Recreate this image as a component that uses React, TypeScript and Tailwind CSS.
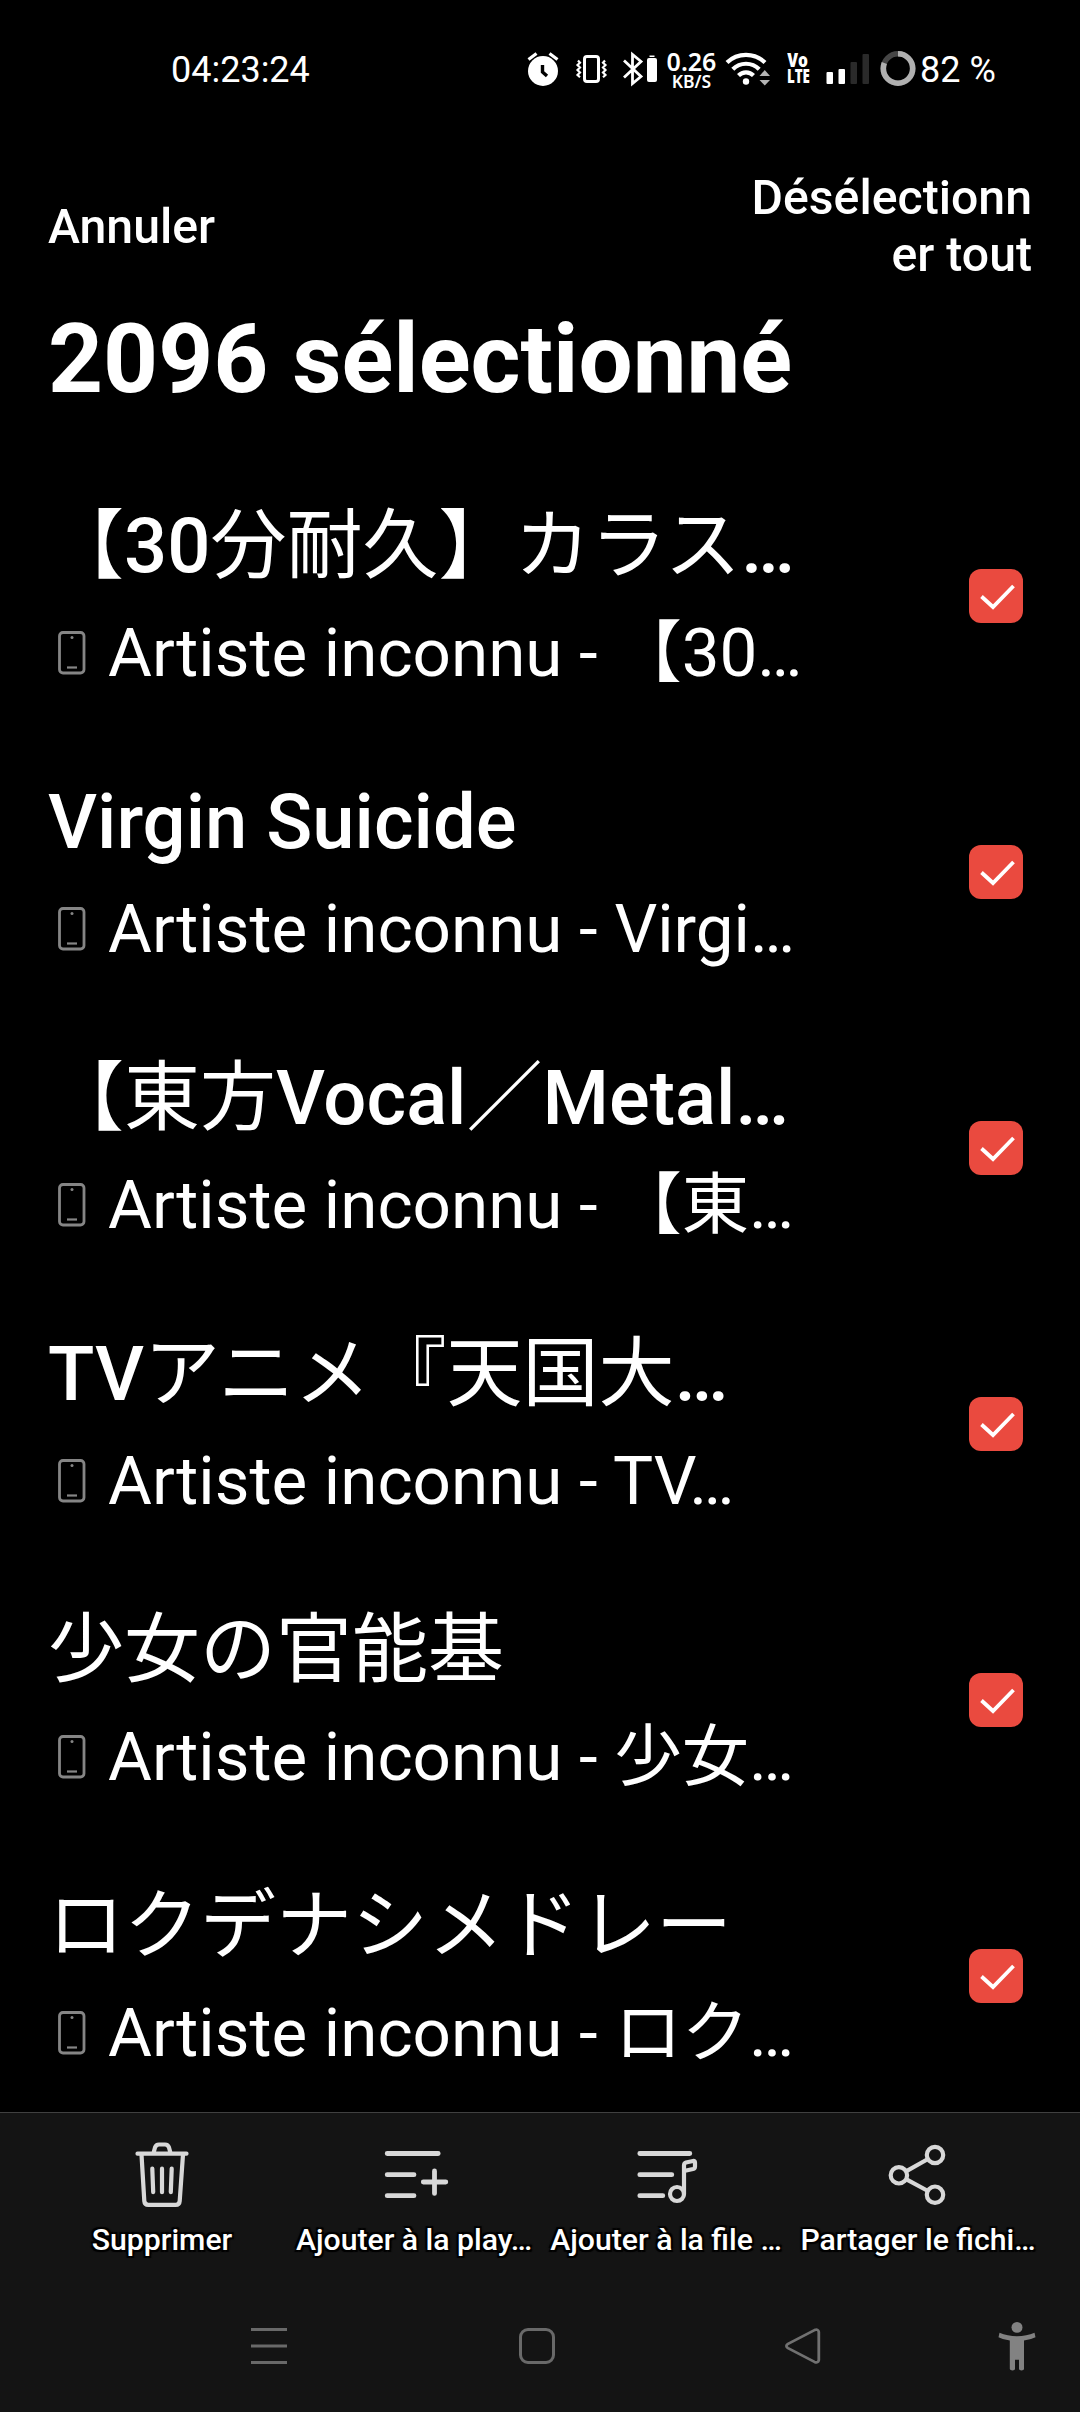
import type { ReactNode } from 'react'

interface Track {
  title: string
  subtitle: string
}

const TRACKS: Track[] = [
  { title: '【30分耐久】カラス…', subtitle: 'Artiste inconnu - 【30…' },
  { title: 'Virgin Suicide', subtitle: 'Artiste inconnu - Virgi…' },
  { title: '【東方Vocal／Metal…', subtitle: 'Artiste inconnu - 【東…' },
  { title: 'TVアニメ『天国大…', subtitle: 'Artiste inconnu - TV…' },
  { title: '少女の官能基', subtitle: 'Artiste inconnu - 少女…' },
  { title: 'ロクデナシメドレー', subtitle: 'Artiste inconnu - ロク…' },
]

// Japanese runs stay at regular weight inside medium titles
function Title({ text }: { text: string }) {
  return (
    <p className="text-[76px] leading-[89px] font-medium">
      {text.split(/([\u3000-\u9fff\uff00-\uffef]+)/).map((part, i) =>
        i % 2 ? (
          <span key={i} className="font-normal">
            {part}
          </span>
        ) : (
          part
        ),
      )}
    </p>
  )
}

function StatusBar() {
  return (
    <div className="flex h-[140px] shrink-0 items-start pt-[50px] pl-[171px] text-[36px] leading-[40px]">
      <span className="w-[354px]">04:23:24</span>

      {/* Alarm */}
      <svg width="36" height="40" viewBox="0 0 36 40" fill="none">
        <circle cx="18" cy="21" r="15" fill="#fff" />
        <path d="M3.5 9.5l8-6M32.5 9.5l-8-6" stroke="#fff" strokeWidth="3.2" />
        <path d="M17.5 15v7l4.5 4" stroke="#000" strokeWidth="3.4" />
      </svg>

      {/* Vibrate */}
      <svg className="ml-[14px]" width="34" height="40" viewBox="0 0 34 40" fill="none" stroke="#fff">
        <rect x="9.5" y="6.5" width="14" height="25" rx="2.5" strokeWidth="3" />
        <path
          d="M3 10.5l2 2.2-2.5 2.3 2.5 2.5-2.5 2.5 2.5 2.5-2.5 2.5 2.5 2.3M30 10.5l-2 2.2 2.5 2.3-2.5 2.5 2.5 2.5-2.5 2.5 2.5 2.5-2.5 2.3"
          strokeWidth="2.2"
        />
      </svg>

      {/* Bluetooth with device battery */}
      <svg className="ml-[12px]" width="38" height="40" viewBox="0 0 38 40" fill="none">
        <path d="M3 10.5L20 26.5l-8.5 7v-29l8.5 7L3 27.5" stroke="#fff" strokeWidth="2.8" />
        <rect x="26" y="8" width="10" height="24" rx="2" fill="#fff" />
        <rect x="28.5" y="5.5" width="5" height="1.5" fill="#fff" />
      </svg>

      {/* Network speed */}
      <div className="ml-[6px] flex w-[53px] flex-col items-center font-['Noto_Sans'] font-semibold">
        <span className="text-[25px] leading-[23px]">0.26</span>
        <span className="text-[17.5px] leading-[16px]">KB/S</span>
      </div>

      {/* Wi-Fi */}
      <svg className="ml-[7px]" width="48" height="40" viewBox="0 0 48 40" fill="none">
        <g stroke="#fff" strokeWidth="4.2">
          <path d="M2 12.5a27.5 27.5 0 0 1 38 0" />
          <path d="M7.8 19.3a18.5 18.5 0 0 1 26.4 0" />
          <path d="M13.5 25.5a10.5 10.5 0 0 1 15 0" />
        </g>
        <circle cx="21" cy="31.5" r="3.2" fill="#fff" />
        <path d="M34.5 26h10.5l-5.250-6zM34.5 30h10.5l-5.250 5.5z" fill="#b4b4b4" />
      </svg>

      {/* VoLTE */}
      <div className="ml-[12px] flex w-[26px] flex-col items-center pt-[2px] font-['Open_Sans'] font-extrabold">
        <span className="scale-x-[.82] text-[19px] leading-[16px]">Vo</span>
        <span className="scale-x-[.7] text-[19px] leading-[16px]">LTE</span>
      </div>

      {/* Signal */}
      <svg className="ml-[15px]" width="44" height="40" viewBox="0 0 44 40">
        <rect x="0.5" y="22" width="6.5" height="12" rx="1" fill="#fff" />
        <rect x="12.5" y="19" width="6.5" height="15" rx="1" fill="#fff" />
        <rect x="24.5" y="12" width="6.5" height="22" rx="1" fill="#2a2a2a" />
        <rect x="36.5" y="4" width="6.5" height="30" rx="1" fill="#2a2a2a" />
      </svg>

      {/* Battery ring */}
      <svg className="ml-[10px]" width="36" height="40" viewBox="0 0 36 40" fill="none" strokeWidth="5.6">
        <circle cx="18" cy="18.5" r="14.7" stroke="#464646" />
        <circle
          cx="18"
          cy="18.5"
          r="14.7"
          stroke="#b0b0b0"
          pathLength="100"
          strokeDasharray="81 19"
          transform="rotate(-90 18 18.5)"
        />
      </svg>
      <span className="ml-[4px] whitespace-nowrap">82 %</span>
    </div>
  )
}

function PhoneIcon() {
  return (
    <svg className="shrink-0" width="28" height="44" viewBox="0 0 28 44" fill="none" stroke="#858585">
      <rect x="1.5" y="1.5" width="24.5" height="40.5" rx="3.5" strokeWidth="2.8" />
      <path d="M9 36.5h10" strokeWidth="2.2" />
      <circle cx="14" cy="6.5" r="1.5" fill="#858585" stroke="none" />
    </svg>
  )
}

function Checkbox() {
  return (
    <div className="flex size-[54px] shrink-0 items-center justify-center rounded-[12px] bg-[#ea4a3f]">
      <svg width="54" height="54" viewBox="0 0 54 54" fill="none">
        <path d="M12.5 27.5L24 38 44.5 17" stroke="#fff" strokeWidth="3.8" />
      </svg>
    </div>
  )
}

function TrackRow({ track }: { track: Track }) {
  return (
    <div className="flex h-[276px] shrink-0 items-center justify-between pr-[57px] pl-[48px]">
      <div className="pt-[3px] whitespace-nowrap">
        <Title text={track.title} />
        <div className="mt-[22px] flex items-center pl-[10px]">
          <PhoneIcon />
          <p className="ml-[22px] text-[67.3px] leading-[80px]">{track.subtitle}</p>
        </div>
      </div>
      <Checkbox />
    </div>
  )
}

function Action({ label, children }: { label: string; children: ReactNode }) {
  return (
    <button className="flex w-[252px] flex-col items-center">
      <svg
        width="72"
        height="72"
        viewBox="0 0 72 72"
        fill="none"
        stroke="#d8d8d8"
        strokeWidth="4.2"
        strokeLinecap="round"
        strokeLinejoin="round"
      >
        {children}
      </svg>
      <span className="mt-[10px] text-[30.2px] leading-[38px] font-medium whitespace-nowrap [text-shadow:2px_2px_1px_#000,-2px_2px_1px_#000,2px_-2px_1px_#000,-2px_-2px_1px_#000]">
        {label}
      </span>
    </button>
  )
}

export default function App() {
  return (
    <div className="flex h-[2412px] w-[1080px] flex-col overflow-hidden bg-black font-[Roboto,'Noto_Sans_CJK_JP',sans-serif] text-white">
      <StatusBar />

      {/* Header */}
      <div className="flex h-[172px] shrink-0 items-center justify-between px-[48px] text-[48.2px] leading-[57px] font-medium">
        <button>Annuler</button>
        <button className="w-[281px] text-right break-all">Désélectionner tout</button>
      </div>
      <h1 className="h-[146px] shrink-0 pl-[48px] text-[96px] leading-[95px] font-bold">2096 sélectionné</h1>

      {/* Tracks */}
      <div className="flex min-h-0 flex-1 flex-col overflow-hidden">
        {TRACKS.map((t) => (
          <TrackRow key={t.title} track={t} />
        ))}
      </div>

      {/* Bottom bar */}
      <div className="h-[300px] shrink-0 border-t border-[#404040] bg-[#141414]">
        <div className="flex px-[36px] pt-[26px]">
          <Action label="Supprimer">
            <path d="M11.5 14.7h49M27.5 14l1.5-5.5q1-3 4-3h6q3 0 4 3l1.5 5.5" />
            <path d="M15.5 15.5L18.3 62q.3 3.8 4 3.8h27.4q3.7 0 4-3.8L57 15.5" />
            <path d="M26.3 29.7l.9 23.5M36 29.7v23.5M45.7 29.7l-.9 23.5" />
          </Action>
          <Action label="Ajouter à la play…">
            <path d="M9.2 14.5h51M9.2 35.7h26.8M9.2 56.7h26.8" strokeWidth="4.8" />
            <path d="M45.3 43h22.5M56.5 31.9v22.5" strokeWidth="4.8" />
          </Action>
          <Action label="Ajouter à la file …">
            <path d="M9.8 14.5h50M9.8 35.7h32M9.8 56.7h23" strokeWidth="4.8" />
            <circle cx="47" cy="55" r="7" />
            <path d="M54 55V26.5q0-2.4 2-3l7-1.5q2-.4 2 1.5v4q0 2-2 2.5l-9 2" />
          </Action>
          <Action label="Partager le fichi…">
            <circle cx="53" cy="16" r="8.2" />
            <circle cx="16.9" cy="36.3" r="8.2" />
            <circle cx="53" cy="55.7" r="8.2" />
            <path d="M24 32.3l22-12.3M24 40.2l22 11.8" strokeLinecap="butt" />
          </Action>
        </div>

        {/* System navigation */}
        <div className="mt-[60px] flex h-[54px] items-center pl-[251px]">
          <svg width="36" height="36" viewBox="0 0 36 36" stroke="#696969" strokeWidth="3">
            <path d="M0 1.5h36M0 18h36M0 34.5h36" />
          </svg>
          <div className="ml-[232px] size-[36px] rounded-[9px] border-3 border-[#696969]" />
          <svg
            className="ml-[229px]"
            width="38"
            height="36"
            viewBox="0 0 38 38"
            preserveAspectRatio="none"
            fill="none"
            stroke="#717171"
            strokeWidth="2.8"
          >
            <path d="M4 16.8L30.5 2.2q3.8-1.5 4.3 2v29.6q-.5 3.5-4.3 2L4 21.2q-3.2-2.2 0-4.4z" strokeLinejoin="round" />
          </svg>
          <svg className="ml-[176px]" width="38" height="49" viewBox="0 0 38 50" fill="#828282" preserveAspectRatio="none">
            <circle cx="19" cy="5.5" r="5.5" />
            <path d="M1.5 11q8 3.5 17.5 3.5T36.5 11l1 4.5q-5 2.5-11.5 3.5V48q0 1.5-2.5 1.5T21 48V38.5h-4V48q0 1.5-2.5 1.5T11.8 48V19Q5 18 .5 15.5z" />
          </svg>
        </div>
      </div>
    </div>
  )
}
